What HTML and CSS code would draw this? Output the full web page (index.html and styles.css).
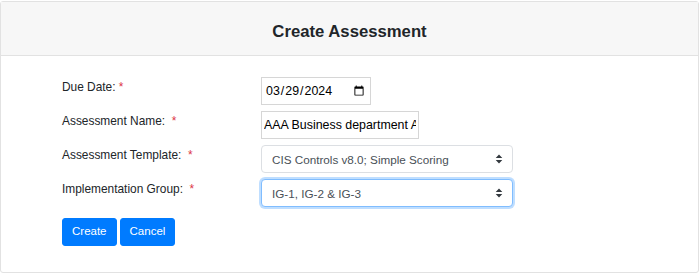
FILE: index.html
```html
<!DOCTYPE html>
<html lang="en">
<head>
<meta charset="utf-8">
<title>Create Assessment</title>
<link rel="stylesheet" href="styles.css">
</head>
<body>
<div class="card">
  <div class="card-header">
    <h5 class="card-title">Create Assessment</h5>
  </div>
  <form class="card-body">
    <div class="form-grid">
      <label class="form-label" for="due">Due Date: <span class="req">*</span></label>
      <div class="field"><input id="due" class="input-date" type="date" value="2024-03-29"></div>

      <label class="form-label" for="name">Assessment Name:&nbsp; <span class="req">*</span></label>
      <div class="field"><input id="name" class="input-text" type="text" value="AAA Business department Assessment"></div>

      <label class="form-label" for="tpl">Assessment Template:&nbsp; <span class="req">*</span></label>
      <div class="field select-wrap">
        <select id="tpl" class="custom-select">
          <option>CIS Controls v8.0; Simple Scoring</option>
        </select>
        <svg class="select-arrow" width="8" height="10" viewBox="0 0 8 10"><path d="M4 0.5 L7.3 4 H0.7 Z M4 9.5 L7.3 6 H0.7 Z" fill="#343a40"/></svg>
      </div>

      <label class="form-label" for="ig">Implementation Group:&nbsp; <span class="req">*</span></label>
      <div class="field select-wrap">
        <select id="ig" class="custom-select focused">
          <option>IG-1, IG-2 &amp; IG-3</option>
        </select>
        <svg class="select-arrow" width="8" height="10" viewBox="0 0 8 10"><path d="M4 0.5 L7.3 4 H0.7 Z M4 9.5 L7.3 6 H0.7 Z" fill="#343a40"/></svg>
      </div>
    </div>
    <div class="actions">
      <button type="button" class="btn">Create</button>
      <button type="button" class="btn">Cancel</button>
    </div>
  </form>
</div>
</body>
</html>
```

FILE: styles.css
```css
html, body {
  margin: 0;
  padding: 0;
  background: #fff;
}
body {
  padding: 1px 1px 0 0;
  font-family: "Liberation Sans", Arial, sans-serif;
  color: #212529;
}
.card {
  width: 697px;
  border: 1px solid #e2e2e2;
  border-radius: 3px;
  background: #fff;
}
.card-header {
  background: #f7f7f7;
  border-bottom: 1px solid #e2e2e2;
  padding: 20px 0 13px;
  text-align: center;
}
.card-title {
  margin: 0;
  font-size: 16.7px;
  line-height: 20px;
  font-weight: bold;
  color: #212529;
}
.card-body {
  display: block;
  margin: 0;
  padding: 21px 0 26px 61px;
}
.form-grid {
  display: grid;
  grid-template-columns: 199px 1fr;
  row-gap: 6px;
}
.form-label {
  font-size: 11.9px;
  line-height: 17.5px;
  padding-top: 2px;
  color: #212529;
}
.req {
  color: #dc3545;
}
.field {
  height: 28px;
}
.input-date, .input-text {
  box-sizing: border-box;
  height: 28px;
  margin: 0;
  border: 1px solid #d6d6d6;
  border-radius: 0;
  font-family: "Liberation Sans", Arial, sans-serif;
  font-size: 12.4px;
  color: #000;
  background: #fff;
  padding: 0 3px;
  outline: none;
}
.input-date {
  width: 110px;
}
.input-text {
  width: 158px;
  padding: 0 2px;
}
.select-wrap {
  position: relative;
  width: 252px;
}
.custom-select {
  box-sizing: border-box;
  width: 252px;
  height: 28px;
  margin: 0;
  padding: 0 24px 0 10px;
  border: 1px solid #dcdfe3;
  border-radius: 4px;
  background: #fff;
  font-family: "Liberation Sans", Arial, sans-serif;
  font-size: 11.7px;
  color: #495057;
  -webkit-appearance: none;
  appearance: none;
  outline: none;
}
.custom-select.focused {
  border-color: #80bdff;
  box-shadow: 0 0 0 2px rgba(0, 123, 255, 0.25);
}
.select-arrow {
  position: absolute;
  right: 10px;
  top: 9px;
  pointer-events: none;
}
.actions {
  display: flex;
  gap: 3px;
  margin-top: 11px;
}
.btn {
  box-sizing: border-box;
  height: 28px;
  padding: 0 9px;
  border: 1px solid #007bff;
  border-radius: 3px;
  background: #007bff;
  color: #fff;
  font-family: "Liberation Sans", Arial, sans-serif;
  font-size: 11.5px;
  line-height: 1;
  cursor: pointer;
}
```
